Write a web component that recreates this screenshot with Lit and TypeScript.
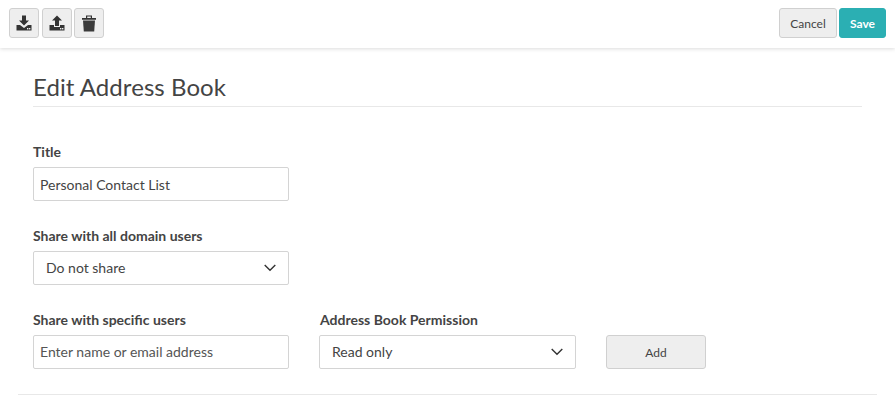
import { LitElement, html, css } from 'lit';
import { customElement } from 'lit/decorators.js';

const chevron = html`<svg class="chev" width="12" height="8" viewBox="0 0 12 8"><path d="M.7 1l5.300 5.300L11.300 1" fill="none" stroke="#333" stroke-width="1.4"/></svg>`;

@customElement('app-root')
export class AppRoot extends LitElement {
  static styles = css`
    :host {
      display: block;
      width: 895px;
      height: 407px;
      overflow: hidden;
      background: #fff;
      font-family: Lato, sans-serif;
      font-size: 14px;
      color: #444;
    }
    .toolbar {
      height: 48px;
      box-sizing: border-box;
      padding: 8px 9px 0;
      display: flex;
      box-shadow: 0 1px 4px rgba(0, 0, 0, 0.14);
    }
    .btn {
      box-sizing: border-box;
      height: 30px;
      border: 1px solid #d0d0d0;
      border-radius: 3px;
      background: #eeeeee;
      display: flex;
      align-items: center;
      justify-content: center;
      font-size: 12px;
      color: #444;
    }
    .icon { width: 30px; margin-right: 3px; }
    .icon.tight { margin-right: 2px; }
    .spacer { flex: 1; }
    .cancel { width: 58px; margin-right: 2px; }
    .save {
      width: 47px;
      background: #2bafb3;
      border-color: #2bafb3;
      color: #fff;
      font-weight: 700;
    }
    .content { padding: 0 33px; }
    h1 {
      margin: 0;
      height: 59px;
      box-sizing: border-box;
      padding-top: 24px;
      font-size: 24px;
      line-height: 30px;
      font-weight: 400;
      letter-spacing: 0.06px;
      color: #444;
      width: 829px;
      border-bottom: 1px solid #e8e8e8;
    }
    .row { display: flex; }
    .first { margin-top: 36px; }
    .next { margin-top: 26px; }
    .field { width: 256px; margin-right: 30px; }
    .field.second { width: 257px; }
    label {
      display: block;
      height: 17px;
      line-height: 17px;
      font-weight: 700;
      margin-bottom: 7px;
    }
    .second label { padding-left: 1px; }
    .box {
      box-sizing: border-box;
      height: 34px;
      border: 1px solid #d4d4d4;
      border-radius: 2px;
      background: #fff;
      display: flex;
      align-items: center;
      padding: 0 6px;
      line-height: 20px;
    }
    .value { padding-top: 1px; }
    .select { padding: 0 12px 0 12px; justify-content: space-between; }
    .placeholder { color: #555; }
    .add { width: 100px; height: 34px; align-self: flex-end; }
    .divider {
      margin: 25px 18px 0;
      height: 1px;
      background: #e8e8e8;
    }
  `;

  render() {
    return html`
      <div class="toolbar">
        <div class="btn icon">
          <svg width="16" height="16" viewBox="0 0 16 16">
            <path d="M6 0.500h4v5h3L8 10.500 3 5.500h3z" fill="#333"/>
            <path d="M0.500 10H4l4 3 4-3h3.500v5.500H.5z" fill="#333"/>
            <rect x="11" y="13" width="1.400" height="1.400" fill="#eee"/>
            <rect x="13" y="13" width="1.400" height="1.400" fill="#eee"/>
          </svg>
        </div>
        <div class="btn icon tight">
          <svg width="16" height="16" viewBox="0 0 16 16">
            <path d="M8 .5l5 5h-3v5.500H6V5.500H3z" fill="#333"/>
            <path d="M0.500 10H5v2h6v-2h4.500v5.500H.5z" fill="#333"/>
            <rect x="11" y="13" width="1.400" height="1.400" fill="#eee"/>
            <rect x="13" y="13" width="1.400" height="1.400" fill="#eee"/>
          </svg>
        </div>
        <div class="btn icon tight">
          <svg width="16" height="17" viewBox="0 0 16 17">
            <path d="M5 3V.5h6V3h4v1.700H1V3zM6.200 3h3.600V1.600H6.200z" fill="#333" fill-rule="evenodd"/>
            <path d="M2 5.500h12L13.200 16.500H2.800z" fill="#3a3a3a"/>
          </svg>
        </div>
        <div class="spacer"></div>
        <div class="btn cancel">Cancel</div>
        <div class="btn save">Save</div>
      </div>
      <div class="content">
        <h1>Edit Address Book</h1>
        <div class="row first">
          <div class="field">
            <label>Title</label>
            <div class="box"><span class="value">Personal Contact List</span></div>
          </div>
        </div>
        <div class="row next">
          <div class="field">
            <label>Share with all domain users</label>
            <div class="box select"><span>Do not share</span>${chevron}</div>
          </div>
        </div>
        <div class="row next">
          <div class="field">
            <label>Share with specific users</label>
            <div class="box placeholder">Enter name or email address</div>
          </div>
          <div class="field second">
            <label>Address Book Permission</label>
            <div class="box select"><span>Read only</span>${chevron}</div>
          </div>
          <div class="btn add">Add</div>
        </div>
      </div>
      <div class="divider"></div>
    `;
  }
}
